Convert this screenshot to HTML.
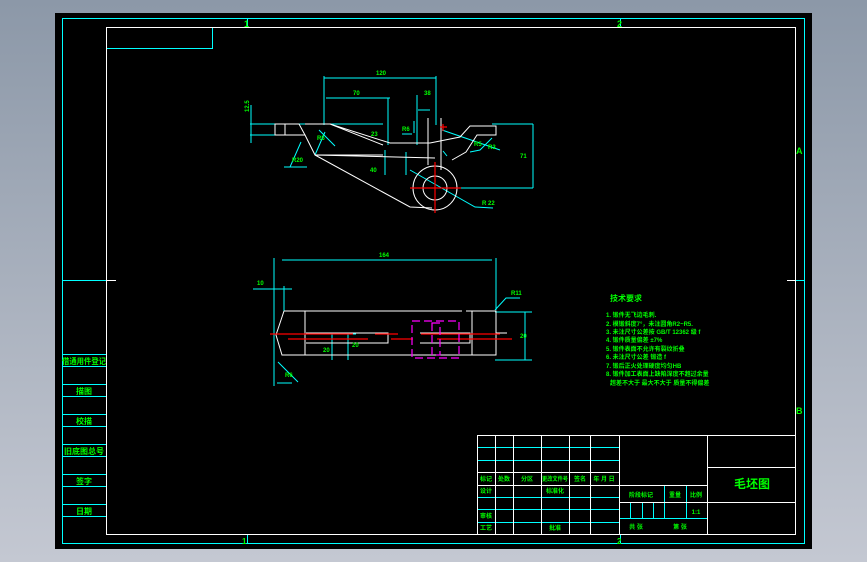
<!DOCTYPE html>
<html><head><meta charset="utf-8"><style>
html,body{margin:0;padding:0;width:867px;height:562px;overflow:hidden;background:linear-gradient(#8c98a8,#c4c8d2);}
svg{position:absolute;left:0;top:0}
text{font-family:"Liberation Sans","Noto Sans CJK SC",sans-serif;fill:#00ff00;font-weight:bold}
</style></head><body>
<svg width="867" height="562" viewBox="0 0 867 562">
<rect x="55" y="13" width="757" height="536" fill="#000"/>
<g fill="none" stroke="#00ffff" stroke-width="1">
<rect x="62.5" y="18.5" width="742" height="525"/>
<path d="M106 48.5H212.5V27M247.5 18V27M620.5 18V27M247.5 534V543M620.5 534V543M62 280.5H106M795 280.5H804"/>
<path d="M62 354.5H106M62 366.5H106M62 384.5H106M62 396.5H106M62 414.5H106M62 426.5H106M62 444.5H106M62 456.5H106M62 474.5H106M62 486.5H106M62 504.5H106M62 516.5H106"/>
<path d="M477 447.5H619M477 460.5H619M477 497.5H619M477 509.5H619M477 522.5H619M619 518.5H707M630.5 502V518M642.5 502V518M653.5 502V518M664.5 485V518M686.5 485V518"/>
</g>
<g fill="none" stroke="#fff" stroke-width="1">
<path d="M106.5 534V27.5H795.5V534.5H106M106 280.5H116M787 280.5H795"/>
<rect x="477.5" y="435.5" width="318" height="99"/>
<path d="M495.5 435V534M513.5 435V534M541.5 435V534M569.5 435V534M590.5 435V534M619.5 435V534M707.5 435V534M477 472.5H619M477 485.5H619M619 485.5H707M619 502.5H707M707 467.5H795M707 502.5H795"/>
</g>
<g font-size="9">
<text x="244" y="27">1</text><text x="617" y="27">2</text>
<text x="242" y="544" font-size="8">1</text><text x="617" y="544" font-size="8">2</text>
<text x="796" y="154">A</text><text x="796" y="414">B</text>
</g>
<g font-size="8" text-anchor="middle">
<text x="84" y="364" textLength="44" lengthAdjust="spacingAndGlyphs">借通用件登记</text><text x="84" y="394">描图</text><text x="84" y="424">校描</text>
<text x="84" y="454" textLength="40" lengthAdjust="spacingAndGlyphs">旧底图总号</text><text x="84" y="484">签字</text><text x="84" y="514">日期</text>
</g>
<g font-size="6" text-anchor="middle">
<text x="486" y="481">标记</text><text x="504" y="481">处数</text><text x="527" y="481">分区</text><text x="555" y="481" textLength="26" lengthAdjust="spacingAndGlyphs">更改文件号</text><text x="580" y="481">签名</text><text x="604" y="481">年 月 日</text>
<text x="486" y="493">设计</text><text x="555" y="493">标准化</text><text x="486" y="518">审核</text><text x="486" y="530">工艺</text><text x="555" y="530">批准</text>
<text x="641" y="497">阶段标记</text><text x="675" y="497">重量</text><text x="696" y="497">比例</text><text x="696" y="514">1:1</text>
<text x="636" y="529">共 张</text><text x="680" y="529">第 张</text>
</g>
<text x="752" y="488" font-size="12" text-anchor="middle">毛坯图</text>
<g font-size="6">
<text x="610" y="301" font-size="8">技术要求</text>
<text x="606" y="317">1. 锻件无飞边毛刺.</text>
<text x="606" y="326">2. 模锻斜度7°，未注圆角R2~R5.</text>
<text x="606" y="334">3. 未注尺寸公差按 GB/T 12362 级 f</text>
<text x="606" y="342">4. 锻件质量偏差 ±7%</text>
<text x="606" y="351">5. 锻件表面不允许有裂纹折叠</text>
<text x="606" y="359">6. 未注尺寸公差 锻造 f</text>
<text x="606" y="368">7. 锻后正火处理硬度均匀HB</text>
<text x="606" y="376">8. 锻件加工表面上缺陷深度不超过余量</text>
<text x="610" y="385">超差不大于 最大不大于 质量不得偏差</text>
</g>
<!-- top view -->
<g fill="none" stroke="#00ffff" stroke-width="1">
<path d="M324 76V125M324 78H436M436 76V125M326 98H390M388 98V145M418 110H430M417 95V145M250 124H383M250 135H300M251 105V143M492 124H533M533 124V188M460 188H533M414 121V133M385 150V175M406 152V175M402 134H412"/>
<path d="M290 167L301 142M284 167H307M315 155L325 132M319 130L335 146M410 170L475 207L493 208M442 130L500 150M470 152L480 150L492 138M443 151L447 156"/>
</g>
<g fill="none" stroke="#fff" stroke-width="1">
<path d="M275 124V135H305L299 124ZM285 124V135M305 124H330L383 145M305 135L315 155H383M330 124L390 143L430 143M315 155L435 158M315 155L410 207L432 208M430 143L460 137L470 126H496V135H477L466 152L452 160M441 160V170"/>
<circle cx="435" cy="188" r="22"/><circle cx="435" cy="188" r="12"/>
<path d="M428 118V165M441 118V165"/>
</g>
<g stroke="#ff0000" stroke-width="1.2"><path d="M410 188H461M435 162V213M440 127H447M443 124V131"/></g>
<!-- bottom view -->
<g fill="none" stroke="#00ffff" stroke-width="1">
<path d="M274 258V386M282 260H492M496 258V310M253 289H292M284 286V311M495 312H532M525 312V360M495 360H532M495 310L506 298H520M278 362L298 382M277 383H292M348 334V360M332 334V360M329 334H356"/>
</g>
<g fill="none" stroke="#fff" stroke-width="1">
<path d="M284 311H462M466 311H496V355H282L276 335L284 311M305 311V355M472 311V355M306 333H388V343H306M420 333H470V343H420M496 333H507"/>
</g>
<g stroke="#ff0000" stroke-width="1.2"><path d="M270 334H353M375 334H398M288 339H368M391 339H413M421 334H500M437 339H512"/></g>
<g fill="none" stroke="#ff00ff" stroke-width="1.2" stroke-dasharray="8 4">
<rect x="412" y="321" width="47" height="37"/><path d="M432 323V355H440V323Z"/>
</g>
<g font-size="6">
<text x="376" y="75">120</text><text x="353" y="95">70</text><text x="424" y="95">38</text>
<text x="246" y="115" transform="rotate(-90 246 112)">12.5</text><text x="520" y="158">71</text>
<text x="371" y="136">23</text><text x="370" y="172">40</text><text x="402" y="131">R6</text><text x="488" y="149">R3</text>
<text x="474" y="146">R5</text><text x="292" y="162">R20</text><text x="317" y="140">R5</text><text x="482" y="205">R 22</text>
<text x="379" y="257">164</text><text x="257" y="285">10</text><text x="511" y="295">R11</text>
<text x="520" y="338">20</text><text x="323" y="352">20</text><text x="352" y="347">20</text><text x="285" y="377">R6</text>
</g>
</svg>
</body></html>
